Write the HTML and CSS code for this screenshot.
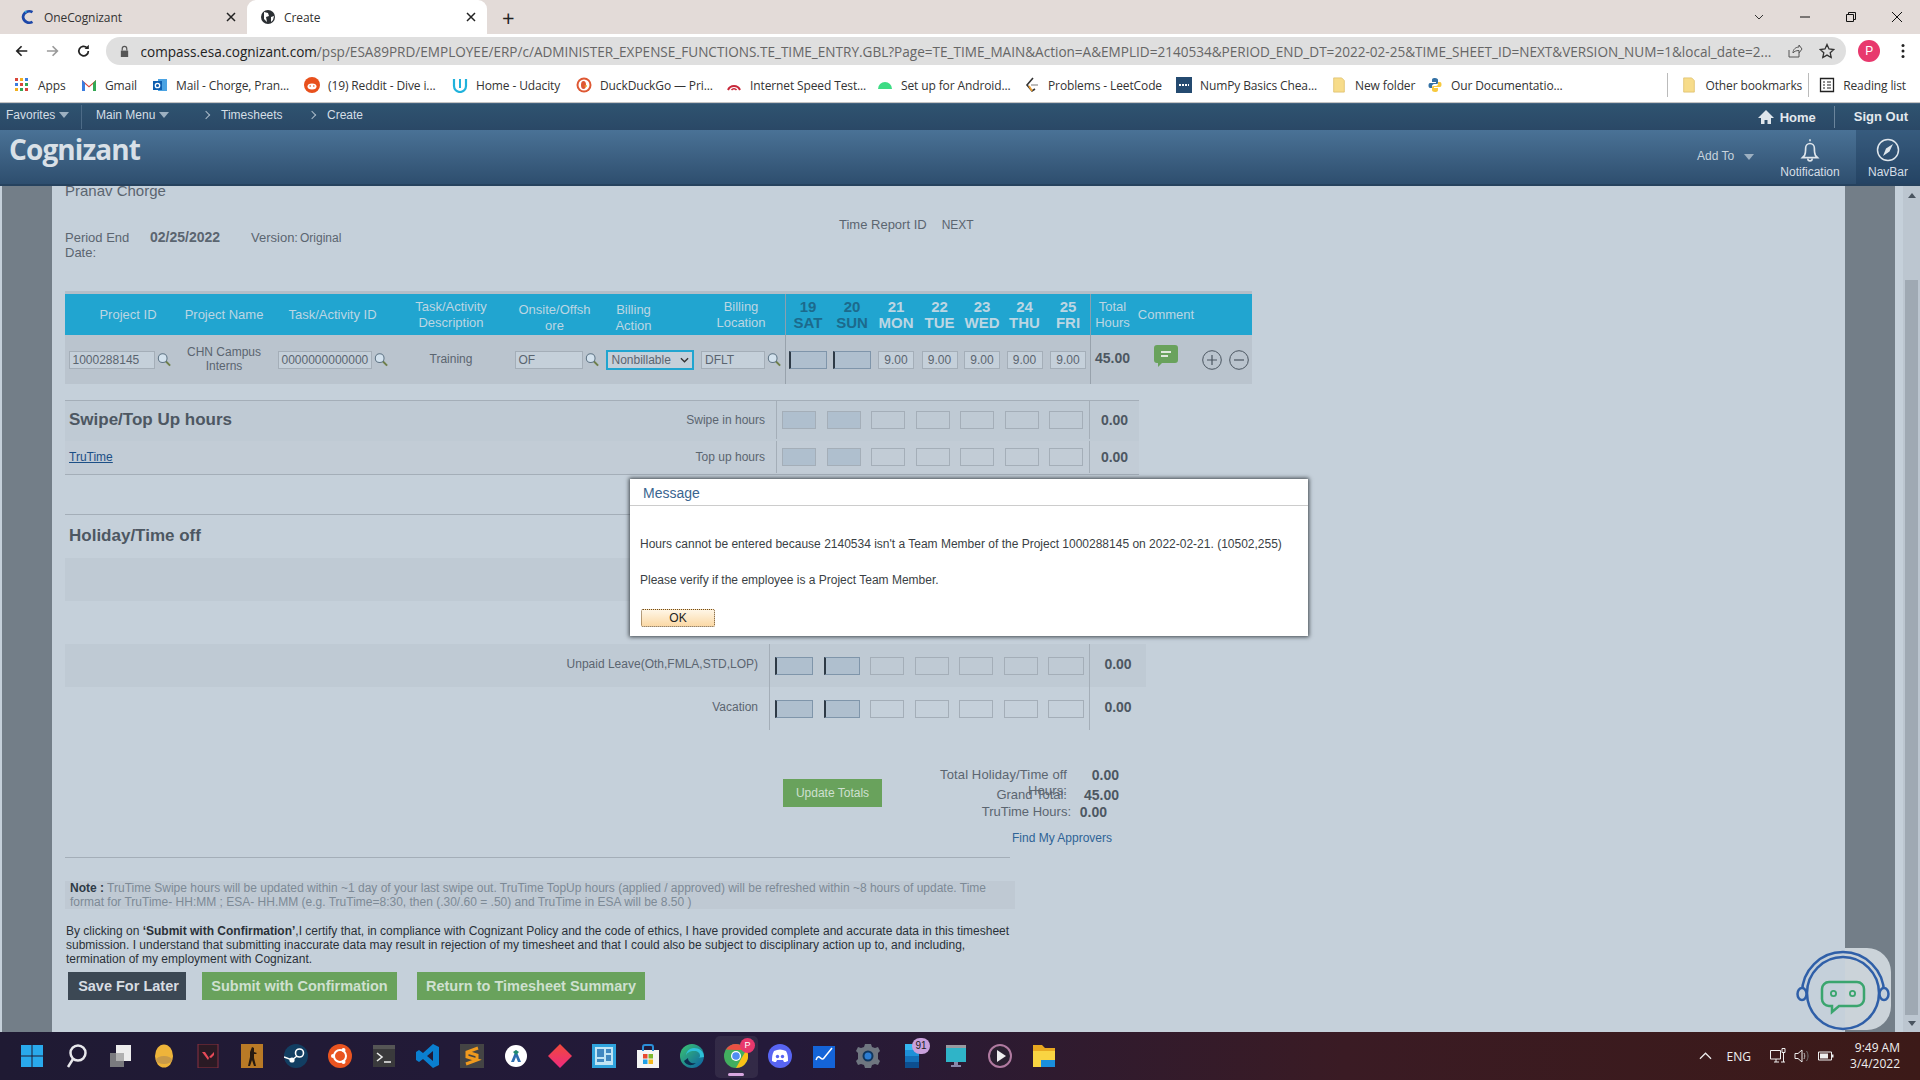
FILE: index.html
```html
<!DOCTYPE html>
<html lang="en">
<head>
    <meta charset="UTF-8">
    <title>Create</title>
    <link rel="stylesheet" href="styles.css">
</head>
<body>

<svg class="sprite" width="0" height="0">
    <symbol id="lens" viewBox="0 0 16 16">
        <path d="M10 10l5 5" stroke="#6f7f4a" stroke-width="2.2" fill="none"/>
        <circle cx="6.5" cy="6.5" r="5" fill="#d3e2ee" stroke="#5f7485" stroke-width="1.2"/>
    </symbol>
    <symbol id="folder" viewBox="0 0 16 18">
        <path d="M2 1h9l3 3v13H2z" fill="#f7dc8a" stroke="#dcbc62" stroke-width=".8"/>
    </symbol>
</svg>

<div class="tabstrip">
    <div class="tab">
        <svg class="favicon" viewBox="0 0 16 16"><path d="M12.5 3.2A6.3 6.3 0 0 0 3 8a6.3 6.3 0 0 0 9.500 4.800" fill="none" stroke="#1d47a8" stroke-width="2.600"/><path d="M5 2l1.500 1.500" stroke="#35b0e0" stroke-width="1.500"/></svg>
        <span class="tab-title">OneCognizant</span>
        <svg class="tab-close" viewBox="0 0 10 10"><path d="M1 1l8 8M9 1l-8 8" stroke="#222" stroke-width="1.500"/></svg>
    </div>
    <div class="tab active">
        <svg class="favicon" viewBox="0 0 16 16"><circle cx="8" cy="8" r="7" fill="#2b2f33"/><path d="M4 3l4 1 1 3-3 1 1 5-3-3zM11 8l3-1-1 4-2 2z" fill="#fff"/></svg>
        <span class="tab-title">Create</span>
        <svg class="tab-close" viewBox="0 0 10 10"><path d="M1 1l8 8M9 1l-8 8" stroke="#222" stroke-width="1.500"/></svg>
    </div>
    <div class="new-tab">+</div>
    <div class="window-btns">
        <svg viewBox="0 0 12 12"><path d="M2 4l4 4 4-4" fill="none" stroke="#333"/></svg>
        <svg viewBox="0 0 12 12"><path d="M1 6h10" stroke="#111"/></svg>
        <svg viewBox="0 0 12 12"><path d="M1.500 3.500h7v7h-7zM3.500 3.500v-2h7v7h-2" fill="none" stroke="#111"/></svg>
        <svg viewBox="0 0 12 12"><path d="M1 1l10 10M11 1L1 11" stroke="#111"/></svg>
    </div>
</div>

<div class="toolbar">
    <svg class="nav-ic" viewBox="0 0 16 16"><path d="M14 8H3M8 3L3 8l5 5" fill="none" stroke="#222" stroke-width="1.800"/></svg>
    <svg class="nav-ic" viewBox="0 0 16 16"><path d="M2 8h11M8 3l5 5-5 5" fill="none" stroke="#9a9a9a" stroke-width="1.800"/></svg>
    <svg class="nav-ic" viewBox="0 0 16 16"><path d="M13 8a5 5 0 1 1-1.500-3.500" fill="none" stroke="#222" stroke-width="1.800"/><path d="M13.500 1.500v4.500H9z" fill="#222"/></svg>
    <div class="omnibox">
        <svg class="lock" viewBox="0 0 12 14"><path d="M2 6h8v7H2z" fill="#555"/><path d="M3.500 6V4a2.500 2.500 0 0 1 5 0v2" fill="none" stroke="#555" stroke-width="1.300"/></svg>
        <div class="url"><span class="host">compass.esa.cognizant.com</span>/psp/ESA89PRD/EMPLOYEE/ERP/c/ADMINISTER_EXPENSE_FUNCTIONS.TE_TIME_ENTRY.GBL?Page=TE_TIME_MAIN&amp;Action=A&amp;EMPLID=2140534&amp;PERIOD_END_DT=2022-02-25&amp;TIME_SHEET_ID=NEXT&amp;VERSION_NUM=1&amp;local_date=2...</div>
        <svg class="omni-ic" viewBox="0 0 16 16"><path d="M2 7v7h10v-4M6 10c0-4 3-6 6-6V2l3 4-3 4V7.500c-3 0-5 1-6 2.500z" fill="none" stroke="#555"/></svg>
        <svg class="omni-ic" viewBox="0 0 16 16"><path d="M8 1.500l2 4.500 4.800.5-3.600 3.200 1 4.800L8 12.100 3.800 14.500l1-4.800L1.200 6.500 6 6z" fill="none" stroke="#333" stroke-width="1.300"/></svg>
    </div>
    <div class="toolbar-end">
        <div class="avatar">P</div>
        <svg class="menu-dots" viewBox="0 0 4 16"><circle cx="2" cy="2.500" r="1.500"/><circle cx="2" cy="8" r="1.500"/><circle cx="2" cy="13.500" r="1.500"/></svg>
    </div>
</div>

<div class="bookmarks">
    <div class="bm">
        <svg class="bm-ic" viewBox="0 0 16 16"><path d="M1 1h3v3H1z" fill="#d9453a"/><path d="M6 1h3v3H6z" fill="#f2b01e"/><path d="M11 1h3v3h-3z" fill="#3b7de0"/><path d="M1 6h3v3H1z" fill="#3b7de0"/><path d="M6 6h3v3H6z" fill="#d9453a"/><path d="M11 6h3v3h-3z" fill="#34a853"/><path d="M1 11h3v3H1z" fill="#f2b01e"/><path d="M6 11h3v3H6z" fill="#34a853"/><path d="M11 11h3v3h-3z" fill="#d9453a"/></svg>
        Apps
    </div>
    <div class="bm">
        <svg class="bm-ic" viewBox="0 0 16 16"><path d="M1 14V3l7 6 7-6v11h-3V7L8 10.500 4 7v7z" fill="#d9453a"/><path d="M1 14V3l3 3v8z" fill="#3b7de0"/><path d="M15 14V3l-3 3v8z" fill="#34a853"/></svg>
        Gmail
    </div>
    <div class="bm">
        <svg class="bm-ic" viewBox="0 0 16 16"><path d="M6 2h9v12H6z" fill="#4ba3e3"/><path d="M1 4h9v9H1z" fill="#0f5fb0"/><circle cx="5.500" cy="8.500" r="2.200" fill="none" stroke="#fff" stroke-width="1.300"/></svg>
        Mail - Chorge, Pran...
    </div>
    <div class="bm">
        <svg class="bm-ic" viewBox="0 0 16 16"><circle cx="8" cy="8" r="8" fill="#e8501c"/><ellipse cx="8" cy="9.500" rx="4.500" ry="3" fill="#fff"/><circle cx="6.200" cy="9" r=".8" fill="#e8501c"/><circle cx="9.800" cy="9" r=".8" fill="#e8501c"/></svg>
        (19) Reddit - Dive i...
    </div>
    <div class="bm">
        <svg class="bm-ic" viewBox="0 0 16 16"><path d="M2 2v7a6 6 0 0 0 12 0V2" fill="none" stroke="#1fb2dc" stroke-width="2.200"/><path d="M8 2v9" stroke="#1fb2dc" stroke-width="2"/></svg>
        Home - Udacity
    </div>
    <div class="bm">
        <svg class="bm-ic" viewBox="0 0 16 16"><circle cx="8" cy="8" r="7.500" fill="#de5833"/><circle cx="8" cy="8" r="5.500" fill="#fff"/><ellipse cx="7.500" cy="8" rx="2.500" ry="4" fill="#de5833"/><path d="M8 9l3-1v2z" fill="#f2c230"/></svg>
        DuckDuckGo — Pri...
    </div>
    <div class="bm">
        <svg class="bm-ic" viewBox="0 0 16 16"><path d="M2 13a6.500 6.500 0 0 1 12 0" fill="none" stroke="#c8283a" stroke-width="2"/><path d="M5.500 13a3 3 0 0 1 5 0" fill="none" stroke="#c8283a" stroke-width="1.500"/></svg>
        Internet Speed Test...
    </div>
    <div class="bm">
        <svg class="bm-ic" viewBox="0 0 16 16"><path d="M1 12a7 7 0 0 1 14 0z" fill="#3ddc84"/></svg>
        Set up for Android...
    </div>
    <div class="bm">
        <svg class="bm-ic" viewBox="0 0 16 16"><path d="M9 1L3 8l5 6 3-2" fill="none" stroke="#333" stroke-width="1.600"/><path d="M7 8h7" stroke="#aaa" stroke-width="1.600"/><path d="M5 9l3 5" stroke="#f0a030" stroke-width="1.600"/></svg>
        Problems - LeetCode
    </div>
    <div class="bm">
        <svg class="bm-ic" viewBox="0 0 16 16"><path d="M0 0h16v16H0z" fill="#244a70"/><path d="M3 8h10" stroke="#fff" stroke-width="2" stroke-dasharray="2 1"/></svg>
        NumPy Basics Chea...
    </div>
    <div class="bm">
        <svg class="bm-ic" viewBox="0 0 16 18"><use href="#folder"/></svg>
        New folder
    </div>
    <div class="bm">
        <svg class="bm-ic" viewBox="0 0 16 16"><path d="M8 1c-3 0-3 1-3 3v1h4v1H3c-2 0-2 5 0 5h2V9c0-1 1-2 2-2h3c1 0 1-1 1-2V3c0-1-1-2-3-2z" fill="#3572a5"/><path d="M8 15c3 0 3-1 3-3v-1H7v-1h6c2 0 2-5 0-5h-2v2c0 1-1 2-2 2H6c-1 0-1 1-1 2v2c0 1 1 2 3 2z" fill="#f7c93e"/></svg>
        Our Documentatio...
    </div>
    <div class="bm-end">
        <div class="bm-other">
            <svg class="bm-ic" viewBox="0 0 16 18"><use href="#folder"/></svg>
            Other bookmarks
        </div>
        <div class="bm-read">
            <svg class="bm-ic" viewBox="0 0 16 16"><path d="M1.500 1.500h13v13h-13z" fill="none" stroke="#222" stroke-width="1.300"/><path d="M4 5h2M4 8h2M4 11h2M8 5h4M8 8h4M8 11h4" stroke="#222" stroke-width="1.200"/></svg>
            Reading list
        </div>
    </div>
</div>

<div class="navbar">
    <div class="crumb favorites">Favorites<span class="caret"></span></div>
    <div class="crumb mainmenu">Main Menu<span class="caret"></span></div>
    <div class="crumb path"><span class="chev"></span>Timesheets</div>
    <div class="crumb path"><span class="chev"></span>Create</div>
    <div class="nav-end">
        <svg class="home-ic" viewBox="0 0 16 16"><path d="M8 1L0 9h3v6h3.500v-4h3v4H13V9h3z" fill="#dfe6ec"/></svg>
        <span class="nav-link">Home</span>
        <span class="nav-link signout">Sign Out</span>
    </div>
</div>

<div class="brandbar">
    <div class="logo">Cognizant</div>
    <div class="brand-end">
        <div class="addto">Add To<span class="caret"></span></div>
        <div class="brand-btn notif">
            <svg viewBox="0 0 20 24"><path d="M10 2v2M5 17c1-2 1-4 1-7a4 4 0 0 1 8 0c0 3 0 5 1 7l2 2H3zM8 20a2 2 0 0 0 4 0" fill="none" stroke="#dfe6ec" stroke-width="1.500"/></svg>
            <span>Notification</span>
        </div>
        <div class="brand-btn navbtn">
            <svg viewBox="0 0 24 24"><circle cx="12" cy="12" r="10.500" fill="none" stroke="#dfe6ec" stroke-width="1.500"/><path d="M17 6l-3.500 7.500-3.500-3zM7 18l3-7.500 3.500 3z" fill="#dfe6ec"/></svg>
            <span>NavBar</span>
        </div>
    </div>
</div>

<div class="main">
    <div class="gutter-left"></div>
    <div class="content">
        <div class="emp-name">Pranav Chorge</div>

        <div class="period">
            <div class="period-label">Period End Date:</div>
            <div class="period-date">02/25/2022</div>
            <div class="version">Version:<span>Original</span></div>
            <div class="report-id">Time Report ID<span>NEXT</span></div>
        </div>

        <div class="entry-table">
            <div class="th th-pid">Project ID</div>
            <div class="th">Project Name</div>
            <div class="th">Task/Activity ID</div>
            <div class="th">Task/Activity Description</div>
            <div class="th th-low th-onsite">Onsite/Offsh ore</div>
            <div class="th th-low th-action">Billing Action</div>
            <div class="th th-loc">Billing Location</div>
            <div class="th day dim">19<br>SAT</div>
            <div class="th day dim">20<br>SUN</div>
            <div class="th day">21<br>MON</div>
            <div class="th day">22<br>TUE</div>
            <div class="th day">23<br>WED</div>
            <div class="th day">24<br>THU</div>
            <div class="th day">25<br>FRI</div>
            <div class="th th-total">Total Hours</div>
            <div class="th">Comment</div>
            <div class="th"></div>
            <div class="th"></div>

            <div class="td"><div class="field w86">1000288145</div><svg class="lens"><use href="#lens"/></svg></div>
            <div class="td text">CHN Campus Interns</div>
            <div class="td"><div class="field w94">0000000000000</div><svg class="lens"><use href="#lens"/></svg></div>
            <div class="td text">Training</div>
            <div class="td"><div class="field w68">OF</div><svg class="lens"><use href="#lens"/></svg></div>
            <div class="td"><div class="select">Nonbillable<svg viewBox="0 0 10 6"><path d="M1 1l4 4 4-4" fill="none" stroke="#333" stroke-width="1.500"/></svg></div></div>
            <div class="td"><div class="field w64">DFLT</div><svg class="lens"><use href="#lens"/></svg></div>
            <div class="td cell-first"><div class="box off dark wide"></div></div>
            <div class="td"><div class="box off dark wide"></div></div>
            <div class="td"><div class="box">9.00</div></div>
            <div class="td"><div class="box">9.00</div></div>
            <div class="td"><div class="box">9.00</div></div>
            <div class="td"><div class="box">9.00</div></div>
            <div class="td"><div class="box">9.00</div></div>
            <div class="td total cell-first">45.00</div>
            <div class="td comment">
                <svg viewBox="0 0 24 22"><path d="M3 0h18a3 3 0 0 1 3 3v12a3 3 0 0 1-3 3H8l-4 4v-4H3a3 3 0 0 1-3-3V3a3 3 0 0 1 3-3z" fill="#69a25c"/><path d="M7 6h10v2H7zM7 10h7v2H7z" fill="#dfe9dc"/></svg>
            </div>
            <div class="td"><svg class="round-ic" viewBox="0 0 20 20"><circle cx="10" cy="10" r="9.300" fill="none" stroke="#4a5560"/><path d="M5 10h10M10 5v10" stroke="#4a5560" stroke-width="1.200"/></svg></div>
            <div class="td"><svg class="round-ic" viewBox="0 0 20 20"><circle cx="10" cy="10" r="9.300" fill="none" stroke="#4a5560"/><path d="M5 10h10" stroke="#4a5560" stroke-width="1.200"/></svg></div>
        </div>

        <div class="swipe">
            <div class="hours-row first">
                <div class="row-head"><h3>Swipe/Top Up hours</h3><span class="row-label">Swipe in hours</span></div>
                <div class="days"><div class="box off"></div><div class="box off"></div><div class="box"></div><div class="box"></div><div class="box"></div><div class="box"></div><div class="box"></div></div>
                <div class="row-total">0.00</div>
            </div>
            <div class="hours-row second">
                <div class="row-head"><a class="trutime" href="#">TruTime</a><span class="row-label">Top up hours</span></div>
                <div class="days"><div class="box off"></div><div class="box off"></div><div class="box"></div><div class="box"></div><div class="box"></div><div class="box"></div><div class="box"></div></div>
                <div class="row-total">0.00</div>
            </div>
        </div>

        <div class="holiday">
            <h3>Holiday/Time off</h3>
            <div class="leave-row stripe"></div>
            <div class="leave-row"></div>
            <div class="leave-row stripe">
                <span class="row-label">Unpaid Leave(Oth,FMLA,STD,LOP)</span>
                <div class="days"><div class="box off dark wide"></div><div class="box off dark"></div><div class="box narrow"></div><div class="box narrow"></div><div class="box narrow"></div><div class="box narrow"></div><div class="box"></div></div>
                <div class="row-total">0.00</div>
            </div>
            <div class="leave-row">
                <span class="row-label">Vacation</span>
                <div class="days"><div class="box off dark wide"></div><div class="box off dark"></div><div class="box narrow"></div><div class="box narrow"></div><div class="box narrow"></div><div class="box narrow"></div><div class="box"></div></div>
                <div class="row-total">0.00</div>
            </div>
        </div>

        <div class="totals">
            <button class="btn-update">Update Totals</button>
            <div class="totals-col">
                <div class="tot-row r1"><span class="tot-label">Total Holiday/Time off Hours:</span><b>0.00</b></div>
                <div class="tot-row r2"><span class="tot-label">Grand Total:</span><b>45.00</b></div>
                <div class="tot-row r3"><span class="tot-label">TruTime Hours:</span><b>0.00</b></div>
                <div class="find">Find My Approvers</div>
            </div>
        </div>

        <hr class="rule">

        <div class="note"><b>Note :</b> TruTime Swipe hours will be updated within ~1 day of your last swipe out. TruTime TopUp hours (applied / approved) will be refreshed within ~8 hours of update. Time format for TruTime- HH:MM ; ESA- HH.MM (e.g. TruTime=8:30, then (.30/.60 = .50) and TruTime in ESA will be 8.50 )</div>

        <div class="certify">By clicking on <b>‘Submit with Confirmation’</b>,I certify that, in compliance with Cognizant Policy and the code of ethics, I have provided complete and accurate data in this timesheet<br>submission. I understand that submitting inaccurate data may result in rejection of my timesheet and that I could also be subject to disciplinary action up to, and including,<br>termination of my employment with Cognizant.</div>

        <div class="actions">
            <button class="btn-dark">Save For Later</button>
            <button class="btn-green">Submit with Confirmation</button>
            <button class="btn-green btn-return">Return to Timesheet Summary</button>
        </div>
    </div>
    <div class="gutter-right"></div>
    <div class="scrollbar">
        <div class="arrow-up"></div>
        <div class="thumb"></div>
        <div class="arrow-down"></div>
    </div>
</div>

<div class="taskbar">
    <svg viewBox="0 0 24 24"><path d="M1 1h10.500v10.500H1zM12.500 1H23v10.500H12.500zM1 12.500h10.500V23H1zM12.500 12.500H23V23H12.500z" fill="#29a9ec"/></svg>
    <svg viewBox="0 0 24 24"><circle cx="14" cy="9" r="7.500" fill="none" stroke="#e8e8ec" stroke-width="2.500"/><path d="M9 15l-5 8" stroke="#e8e8ec" stroke-width="2.500"/></svg>
    <svg viewBox="0 0 24 24"><path d="M2 9h14v14H2z" fill="#7a7a7e"/><path d="M8 1h15v16H8z" fill="#ececec"/><path d="M8 9h8v8H8z" fill="#b0b0b0"/></svg>
    <svg viewBox="0 0 24 24"><ellipse cx="12" cy="12" rx="9" ry="11.500" fill="#eeb43a"/><ellipse cx="12" cy="16" rx="8" ry="4" fill="#c89a48"/></svg>
    <svg viewBox="0 0 24 24"><path d="M2 0h20v24H2z" fill="#2a1a24" stroke="#8a3040"/><path d="M6 8l6 8 1-2-4-6zM13 13l5-5v3l-3 3z" fill="#e84a58"/></svg>
    <svg viewBox="0 0 24 24"><path d="M1 0h22v24H1z" fill="#b97a26"/><path d="M12 3l2 1v4l3 1-1 1-2 0v4l2 8h-2l-2-6-2 6H8l2-9V8z" fill="#251a10"/></svg>
    <svg viewBox="0 0 24 24"><circle cx="12" cy="12" r="12" fill="#123e62"/><circle cx="15.500" cy="9" r="4" fill="none" stroke="#fff" stroke-width="1.600"/><circle cx="8" cy="16" r="2.600" fill="#fff"/><path d="M0 13l8 3 5-4" stroke="#fff" stroke-width="1.500" fill="none"/></svg>
    <svg viewBox="0 0 24 24"><circle cx="12" cy="12" r="12" fill="#e95420"/><circle cx="12" cy="12" r="6" fill="none" stroke="#fff" stroke-width="2"/><circle cx="5" cy="12" r="2" fill="#fff"/><circle cx="15.500" cy="6" r="2" fill="#fff"/><circle cx="15.500" cy="18" r="2" fill="#fff"/></svg>
    <svg viewBox="0 0 24 24"><path d="M1 1h22v22H1z" fill="#3a3a3c"/><path d="M1 1h22v4H1z" fill="#555"/><path d="M5 9l5 4-5 4M12 18h7" fill="none" stroke="#eee" stroke-width="1.600"/></svg>
    <svg viewBox="0 0 24 24"><path d="M17 0l6 3v18l-6 3-10-9-4 3-3-2v-8l3-2 4 3zM17 7l-6 5 6 5z" fill="#0a7fd0"/></svg>
    <svg viewBox="0 0 24 24"><path d="M0 0h24v24H0z" fill="#444"/><path d="M18 4L7 8v5l10 3-11 4 11-4v-5L7 8" fill="none" stroke="#f09a1e" stroke-width="3"/></svg>
    <svg viewBox="0 0 24 24"><circle cx="12" cy="12" r="11" fill="#fff"/><path d="M12 6l5 12h-3l-2-5-2 5H7z" fill="#2f6fb0"/><path d="M9 8l3-2 3 2-3 3z" fill="#1f8a70"/></svg>
    <svg viewBox="0 0 24 24"><defs><linearGradient id="gem" x1="0" y1="0" x2="0" y2="1"><stop offset="0" stop-color="#f04a3a"/><stop offset="1" stop-color="#ee2a80"/></linearGradient></defs><path d="M12 0l12 12-12 12L0 12z" fill="url(#gem)"/></svg>
    <svg viewBox="0 0 24 24"><path d="M0 0h24v24H0z" fill="#2fa3dc"/><path d="M3 3h18v18H3z" fill="#bfe4f4"/><path d="M5 5h7v8H5zM14 5h5v4h-5zM14 11h5v6h-5zM5 15h7v3H5z" fill="#3f87c0"/></svg>
    <svg viewBox="0 0 24 24"><path d="M1 6h22v18H1z" fill="#f4f4f4"/><path d="M7 7V3a2 2 0 0 1 2-2h6a2 2 0 0 1 2 2v4" fill="none" stroke="#2b8fd8" stroke-width="2"/><path d="M7 10h4.500v4.500H7z" fill="#e8492f"/><path d="M12.500 10H17v4.500h-4.500z" fill="#7cb82f"/><path d="M7 15.500h4.500V20H7z" fill="#1fa0e8"/><path d="M12.500 15.500H17V20h-4.500z" fill="#f5b81e"/></svg>
    <svg viewBox="0 0 24 24"><defs><linearGradient id="edge" x1="0" y1="0" x2="1" y2="1"><stop offset="0" stop-color="#3bc46e"/><stop offset="1" stop-color="#0b5fa8"/></linearGradient></defs><circle cx="12" cy="12" r="12" fill="url(#edge)"/><path d="M24 13c0-6-5-9-10-9-5 0-8 4-8 8 0-3 4-5 8-5 4 0 6 2 6 5 0 1-1 2-3 2z" fill="#2ec0d8"/><path d="M8 14c0 4 4 6 8 5-5 4-10 2-12-2z" fill="#0d2d50"/></svg>
    <div class="task-active">
        <svg viewBox="0 0 24 24"><circle cx="12" cy="12" r="12" fill="#34a853"/><path d="M12 0a12 12 0 0 1 10.400 6H12z" fill="#ea4335"/><path d="M2 5.500A12 12 0 0 1 12 0v6z" fill="#ea4335"/><path d="M22.400 6A12 12 0 0 1 12 24l5-9z" fill="#fbbc05"/><circle cx="12" cy="12" r="5" fill="#fff"/><circle cx="12" cy="12" r="3.800" fill="#4285f4"/></svg>
        <span class="p-badge">P</span>
        <span class="run-mark"></span>
    </div>
    <svg viewBox="0 0 24 24"><circle cx="12" cy="12" r="12" fill="#5865f2"/><path d="M6 7c4-2 8-2 12 0 2 3 2 7 2 10-2 1-3 1-4 1l-1-2H9l-1 2c-1 0-2 0-4-1 0-3 0-7 2-10z" fill="#fff"/><circle cx="9.500" cy="12.500" r="1.700" fill="#5865f2"/><circle cx="14.500" cy="12.500" r="1.700" fill="#5865f2"/></svg>
    <svg viewBox="0 0 24 24"><path d="M1 2h22v22H1z" fill="#1464d8"/><path d="M4 16c3-8 5 2 8-2s5-6 8-10" fill="none" stroke="#fff" stroke-width="1.500"/></svg>
    <svg viewBox="0 0 24 24"><path d="M9 0h6l1 3 3 1 3-1 2 4-2 2v6l2 2-2 4-3-1-3 1-1 3H9l-1-3-3-1-3 1-2-4 2-2V9L0 7l2-4 3 1 3-1z" fill="#6f7680"/><circle cx="12" cy="12" r="5.500" fill="#10365e"/><circle cx="12" cy="12" r="3.500" fill="#2d7dd2"/></svg>
    <div class="task-badged">
        <svg viewBox="0 0 24 24"><path d="M5 0h14v6H5z" fill="#35b6f0"/><path d="M5 6h14v6H5z" fill="#1e90d8"/><path d="M5 12h14v6H5z" fill="#1470b8"/><path d="M5 18h14v6H5z" fill="#0d4f90"/></svg>
        <span class="num-badge">91</span>
    </div>
    <svg viewBox="0 0 24 24"><path d="M2 1h20v17H2z" fill="#2fb4c8"/><path d="M2 1h20v3H2z" fill="#9a9aa0"/><path d="M10 18h4v3h-4zM7 21h10v2H7z" fill="#88a"/></svg>
    <svg viewBox="0 0 24 24"><circle cx="12" cy="12" r="11" fill="#2a2030" stroke="#b07aa0" stroke-width="2"/><path d="M9 6l9 6-9 6z" fill="#eee"/></svg>
    <svg viewBox="0 0 24 24"><path d="M1 1h9l3 3h10v19H1z" fill="#e8a820"/><path d="M1 7h22v16H1z" fill="#f9d442"/><path d="M9 16h14v7H9z" fill="#1a8fdc"/></svg>

    <div class="tray">
        <svg class="tray-up" viewBox="0 0 14 8"><path d="M1 7l6-6 6 6" fill="none" stroke="#eee" stroke-width="1.300"/></svg>
        <span class="lang">ENG</span>
        <svg class="tray-net" viewBox="0 0 16 16"><path d="M.5 2.500h10v8.500H.5zM4 14h5M6 11v3M13.500 4v10M11 14h4" fill="none" stroke="#eee"/><path d="M12 .5h3v4h-3z" fill="none" stroke="#eee"/></svg>
        <svg class="tray-vol" viewBox="0 0 16 16"><path d="M1 5.500h3l4-3.500v12l-4-3.500H1z" fill="none" stroke="#eee"/><path d="M10 5c1 2 1 4 0 6" fill="none" stroke="#bbb"/><path d="M12.500 3c2 3 2 7 0 10" fill="none" stroke="#777"/></svg>
        <svg class="tray-bat" viewBox="0 0 16 10"><path d="M.5 1h13v8H.5z" fill="none" stroke="#eee"/><path d="M2 2.500h8v5H2z" fill="#eee"/><path d="M14 3.500h1.500v3H14z" fill="#eee"/></svg>
        <div class="clock">9:49 AM<br>3/4/2022</div>
    </div>
</div>

<div class="modal">
    <div class="modal-title">Message</div>
    <div class="modal-body">
        <p>Hours cannot be entered because 2140534 isn't a Team Member of the Project 1000288145 on 2022-02-21. (10502,255)</p>
        <p>Please verify if the employee is a Project Team Member.</p>
        <button class="btn-ok">OK</button>
    </div>
</div>

<div class="chatbot">
    <svg viewBox="0 0 96 90">
        <path d="M7 45a41 41 0 0 1 82 0" fill="none" stroke="#2f5fa8" stroke-width="2.500"/>
        <circle cx="48" cy="45" r="36" fill="none" stroke="#2f5fa8" stroke-width="2.500"/>
        <ellipse cx="7" cy="46" rx="4.500" ry="6" fill="#c5d0da" stroke="#2f5fa8" stroke-width="2.500"/>
        <ellipse cx="89" cy="46" rx="4.500" ry="6" fill="#c5d0da" stroke="#2f5fa8" stroke-width="2.500"/>
        <path d="M34 34h28a7 7 0 0 1 7 7v10a7 7 0 0 1-7 7H44l-7 6v-6h-3a7 7 0 0 1-7-7V41a7 7 0 0 1 7-7z" fill="none" stroke="#3aa56e" stroke-width="2.500"/>
        <circle cx="38.500" cy="45.500" r="2.600" fill="none" stroke="#3aa56e" stroke-width="1.800"/>
        <circle cx="57.500" cy="45.500" r="2.600" fill="none" stroke="#3aa56e" stroke-width="1.800"/>
    </svg>
</div>

</body>
</html>
```

FILE: styles.css
```css
:root {
    --page: #c5d0da;
    --stripe: #bfcad4;
    --line: #a4aeb8;
    --text: #5b6570;
    --head: #21a5d0;
    --green: #69a25c;
}

* {
    box-sizing: border-box;
}

html, body {
    margin: 0;
    height: 100%;
    overflow: hidden;
}

body {
    display: flex;
    flex-direction: column;
    font-family: "Liberation Sans", Arial, sans-serif;
    font-size: 12px;
    color: var(--text);
    background-color: var(--page);
}

.sprite {
    position: absolute;
}

/* browser chrome */
.tabstrip {
    height: 34px;
    display: flex;
    align-items: stretch;
    padding-left: 7px;
    background-color: #e3dbd8;
    font-family: "Open Sans", sans-serif;
}

.tab {
    width: 240px;
    display: flex;
    align-items: center;
    padding: 0 11px 0 13px;
    font-size: 12px;
    letter-spacing: -.1px;
    color: #333;
}

.tab.active {
    background-color: #fff;
    border-radius: 9px 9px 0 0;
}

.favicon {
    width: 16px;
    height: 16px;
    margin-right: 8px;
}

.tab-title {
    flex: 1;
}

.tab-close {
    width: 10px;
    height: 10px;
}

.new-tab {
    margin-left: 15px;
    align-self: center;
    font-size: 22px;
    line-height: 26px;
    color: #222;
}

.window-btns {
    margin-left: auto;
    display: flex;
    align-items: center;
    gap: 34px;
    padding-right: 17px;
}

.window-btns svg {
    width: 12px;
    height: 12px;
}

.toolbar {
    height: 34px;
    display: flex;
    align-items: center;
    padding-left: 6px;
    background-color: #fff;
}

.nav-ic {
    width: 16px;
    height: 16px;
    margin: 0 8px;
}

.omnibox {
    flex: 1;
    height: 28px;
    margin-left: 6px;
    display: flex;
    align-items: center;
    padding: 0 11px 0 13px;
    border-radius: 14px;
    background-color: #dfdfdf;
}

.lock {
    width: 11px;
    height: 13px;
    margin-right: 11px;
}

.url {
    flex: 1;
    padding-top: 1px;
    white-space: nowrap;
    overflow: hidden;
    font-family: "Open Sans", sans-serif;
    font-size: 13.57px;
    color: #666;
}

.host {
    color: #222;
}

.omni-ic {
    width: 16px;
    height: 16px;
    margin-left: 16px;
}

.toolbar-end {
    width: 77px;
    display: flex;
    align-items: center;
    padding-left: 12px;
}

.avatar {
    width: 22px;
    height: 22px;
    border-radius: 50%;
    background-color: #e8386d;
    color: #fff;
    font-size: 12px;
    line-height: 22px;
    text-align: center;
}

.menu-dots {
    width: 4px;
    height: 16px;
    margin-left: 21px;
    fill: #222;
}

.bookmarks {
    height: 35px;
    display: grid;
    grid-template-columns: 67px 71px 152px 148px 124px 150px 151px 147px 152px 155px 96px 230px 1fr;
    align-items: center;
    padding-left: 14px;
    background-color: #fff;
    border-bottom: 1px solid #c4c4c4;
    font-family: "Open Sans", sans-serif;
    font-size: 12px;
    letter-spacing: -.12px;
    color: #333;
    white-space: nowrap;
}

.bm, .bm-other, .bm-read {
    display: flex;
    align-items: center;
}

.bm-ic {
    width: 16px;
    height: 16px;
    margin-right: 8px;
    flex: none;
}

.bm-end {
    display: flex;
    align-items: center;
    justify-content: flex-end;
    padding-right: 14px;
}

.bm-other {
    padding: 0 6px 0 13px;
    border-left: 1px solid #bbb;
    height: 24px;
}

.bm-read {
    padding-left: 10px;
    border-left: 1px solid #bbb;
    height: 24px;
}

/* peoplesoft header */
.navbar {
    height: 27px;
    display: flex;
    align-items: center;
    background: linear-gradient(#2f5370, #2a4866);
    color: #d5dee6;
    border-top: 1px solid #43627f;
}

.crumb {
    display: flex;
    align-items: center;
    padding-bottom: 4px;
}

.favorites {
    width: 82px;
    height: 24px;
    padding-left: 6px;
    border-right: 1px solid #4d6b87;
}

.mainmenu {
    width: 109px;
    padding-left: 14px;
}

.path {
    width: 106px;
    padding-left: 12px;
}

.caret {
    display: inline-block;
    width: 0;
    height: 0;
    margin-left: 4px;
    border-left: 5px solid transparent;
    border-right: 5px solid transparent;
    border-top: 6px solid #9db0c1;
}

.chev {
    width: 6px;
    height: 6px;
    margin-right: 12px;
    border-top: 1px solid #a9bac8;
    border-right: 1px solid #a9bac8;
    transform: rotate(45deg);
}

.nav-end {
    margin-left: auto;
    display: flex;
    align-items: center;
    padding-right: 12px;
    font-size: 13px;
    font-weight: bold;
    color: #e3e9ee;
}

.home-ic {
    width: 16px;
    height: 16px;
    margin-right: 6px;
}

.signout {
    margin-left: 18px;
    padding-left: 19px;
    border-left: 1px solid #6b859c;
    line-height: 22px;
}

.brandbar {
    height: 56px;
    display: flex;
    justify-content: space-between;
    background: linear-gradient(#4a7296, #2e4e6e);
    border-bottom: 2px solid #26425e;
    color: #d5dee6;
}

.logo {
    padding: 1px 0 0 9px;
    font-family: "Open Sans", sans-serif;
    font-size: 28px;
    line-height: 36px;
    font-weight: 700;
    letter-spacing: -.9px;
    color: #d9e0e7;
}

.brand-end {
    display: flex;
}

.addto {
    width: 78px;
    padding-top: 19px;
    display: flex;
    align-items: flex-start;
    color: #c8d4de;
}

.addto .caret {
    margin: 5px 0 0 10px;
}

.brand-btn {
    display: flex;
    flex-direction: column;
    align-items: center;
    padding-top: 7px;
}

.brand-btn svg {
    width: 24px;
    height: 26px;
    margin-bottom: 2px;
}

.notif {
    width: 70px;
    margin-right: 11px;
}

.navbtn {
    width: 64px;
    background-color: rgba(20, 50, 80, .35);
}

/* page */
.main {
    flex: 1;
    min-height: 0;
    display: flex;
}

.gutter-left {
    width: 52px;
    border-left: 2px solid var(--page);
    background-color: #737e88;
}

.content {
    flex: 1;
    min-width: 0;
    padding-left: 13px;
    overflow: hidden;
}

.gutter-right {
    width: 50px;
    margin-right: 8px;
    background-color: #737e88;
}

.scrollbar {
    width: 17px;
    padding: 0 2px;
    display: flex;
    flex-direction: column;
    align-items: center;
    background-color: #bcc6d0;
}

.arrow-up {
    margin-top: 7px;
    border-left: 4px solid transparent;
    border-right: 4px solid transparent;
    border-bottom: 5px solid #4a5560;
}

.thumb {
    width: 13px;
    flex: 1;
    margin: 82px 0 6px;
    background-color: #9fa9b3;
}

.arrow-down {
    margin-bottom: 6px;
    border-left: 4px solid transparent;
    border-right: 4px solid transparent;
    border-top: 5px solid #4a5560;
}

.emp-name {
    margin-top: -4px;
    font-size: 15px;
    line-height: 17px;
}

.period {
    margin-top: 31px;
    height: 30px;
    display: flex;
    font-size: 13px;
    line-height: 15px;
}

.period-label {
    width: 85px;
    padding-right: 15px;
}

.period-date {
    width: 101px;
    font-size: 14px;
    font-weight: bold;
}

.version {
    width: 588px;
}

.version span {
    margin-left: 2px;
    font-size: 12px;
}

.report-id {
    margin-top: -13px;
}

.report-id span {
    margin-left: 15px;
    font-size: 12px;
}

/* entry table */
.entry-table {
    margin-top: 31px;
    width: 1187px;
    display: grid;
    grid-template-columns: 109px 100px 117px 120px 91px 95px 88px 45px 44px 44px 43px 42px 43px 44px 44px 64px 27px 27px;
    grid-template-rows: 41px 49px;
    border-top: 3px solid #b4bec8;
    background-color: #bac4ce;
}

.th {
    display: flex;
    align-items: center;
    justify-content: center;
    text-align: center;
    font-size: 13px;
    line-height: 16px;
    color: #bcd6e3;
    background-color: var(--head);
}

.th.day {
    font-size: 15px;
    font-weight: bold;
}

.th.dim {
    color: #1c6a8c;
}

.th-pid {
    padding-left: 17px;
}

.th-low {
    padding-top: 7px;
}

.th-onsite {
    padding-right: 4px;
}

.th-action {
    padding: 7px 36px 0 4px;
}

.th-loc {
    padding: 0 20px;
}

.th.day:nth-child(8), .th-total {
    border-left: 1px solid #8aa0b0;
}

.td {
    display: flex;
    align-items: center;
    justify-content: center;
    text-align: center;
}

.td.text {
    padding: 0 6px 2px;
    line-height: 14px;
}

.cell-first {
    border-left: 1px solid #98a2ac;
}

.field {
    height: 18px;
    padding-left: 3px;
    border: 1px solid var(--line);
    background-color: #c5d0da;
    text-align: left;
    line-height: 16px;
    overflow: hidden;
    white-space: nowrap;
}

.w86 { width: 86px; }
.w94 { width: 94px; }
.w68 { width: 68px; }
.w64 { width: 64px; }

.lens {
    width: 14px;
    height: 15px;
    margin-left: 2px;
    flex: none;
}

.select {
    width: 88px;
    height: 20px;
    display: flex;
    align-items: center;
    justify-content: space-between;
    padding: 0 3px 0 4px;
    border: 2px solid var(--head);
    background-color: #c5d0da;
}

.select svg {
    width: 9px;
    height: 6px;
}

.box {
    width: 34px;
    height: 18px;
    border: 1px solid var(--line);
    line-height: 16px;
    text-align: center;
    flex: none;
}

.entry-table .box {
    width: 36px;
    background-color: #c5d0da;
}

.box.off {
    background-color: #afbfce;
}

.entry-table .box.off {
    width: 38px;
    background-color: #afbfce;
}

.box.dark {
    width: 36px;
    border: 1px solid #7f95aa;
    border-left: 2px solid #2e3a46;
}

.box.dark.wide {
    width: 38px;
}

.holiday .box {
    width: 36px;
}

.holiday .box.narrow {
    width: 34px;
}

.td.total {
    padding-bottom: 3px;
    font-size: 14px;
    font-weight: bold;
    color: #4d5762;
}

.comment svg {
    width: 24px;
    height: 22px;
    margin-bottom: 7px;
}

.round-ic {
    width: 20px;
    height: 20px;
}

/* hours sections */
h3 {
    margin: 0;
    font-size: 17px;
    color: #4d5762;
}

.swipe {
    margin-top: 16px;
    width: 1074px;
    border-top: 1px solid var(--line);
    border-bottom: 1px solid var(--line);
}

.hours-row {
    display: flex;
    background-color: var(--stripe);
}

.hours-row.first {
    height: 40px;
    padding-bottom: 2px;
}

.hours-row.second {
    height: 33px;
    padding-bottom: 1px;
    background-color: #c2ccd6;
}

.row-head {
    width: 711px;
    padding: 0 11px 0 4px;
    display: flex;
    align-items: center;
    justify-content: space-between;
}

.trutime {
    color: #1c4f86;
}

.days {
    width: 314px;
    display: flex;
    align-items: center;
    justify-content: space-between;
    padding: 0 6px 0 5px;
    border-left: 1px solid var(--line);
    border-right: 1px solid var(--line);
}

.row-total {
    flex: 1;
    display: flex;
    align-items: center;
    justify-content: center;
    font-size: 14px;
    font-weight: bold;
    color: #4d5762;
}

.holiday {
    margin-top: 39px;
    width: 1081px;
    border-top: 1px solid var(--line);
}

.holiday h3 {
    height: 43px;
    padding: 11px 0 0 4px;
    line-height: 20px;
}

.leave-row {
    height: 43px;
    display: flex;
    align-items: center;
    justify-content: flex-end;
}

.leave-row.stripe {
    background-color: var(--stripe);
}

.leave-row .row-label {
    flex: 1;
    padding: 0 11px 3px 0;
    text-align: right;
}

.leave-row .days {
    width: 321px;
    height: 100%;
    padding: 0 5px;
}

.leave-row .row-total {
    flex: none;
    width: 56px;
    height: 100%;
    padding-bottom: 3px;
}

.totals {
    height: 115px;
    display: flex;
}

.btn-update {
    width: 99px;
    height: 28px;
    margin: 49px 0 0 718px;
    border: 0;
    background-color: var(--green);
    color: #cfe0d0;
    font-family: inherit;
    font-size: 12px;
}

.totals-col {
    margin: 37px 0 0 55px;
    font-size: 13px;
}

.tot-row {
    display: flex;
}

.tot-row b {
    width: 52px;
    text-align: right;
    font-size: 14px;
    color: #4d5762;
}

.tot-label {
    width: 130px;
    text-align: right;
    line-height: 16px;
}

.r1 {
    height: 17px;
}

.r1 .tot-label {
    letter-spacing: .12px;
}

.r2 {
    height: 20px;
    padding-top: 3px;
}

.r3 {
    height: 14px;
}

.r3 .tot-label {
    width: 134px;
}

.r3 b {
    width: 36px;
}

.find {
    margin: 13px 0 0 75px;
    font-size: 12px;
    line-height: 14px;
    color: #2e6396;
}

.rule {
    width: 945px;
    height: 1px;
    margin: 12px 0 0;
    border: 0;
    background-color: var(--line);
}

.note {
    width: 950px;
    height: 28px;
    margin-top: 23px;
    padding: 0 5px;
    background-color: #bfc9d3;
    line-height: 14px;
    color: #7d8a96;
}

.note b {
    color: #2e3a46;
}

.certify {
    width: 950px;
    margin: 15px 0 0 1px;
    line-height: 14px;
    color: #2a3038;
}

.actions {
    margin: 6px 0 0 3px;
    display: flex;
    gap: 16px;
}

.actions button {
    height: 28px;
    padding: 0;
    border: 0;
    font-family: inherit;
    font-size: 14.5px;
    font-weight: bold;
}

.actions .btn-dark {
    width: 118px;
    padding-left: 3px;
    background-color: #3c4854;
    color: #d8dde2;
}

.btn-green {
    width: 195px;
    background-color: var(--green);
    color: #cfe0d0;
}

.btn-return {
    width: 228px;
    margin-left: 4px;
}

/* taskbar */
.taskbar {
    height: 48px;
    display: flex;
    align-items: center;
    gap: 20px;
    padding-left: 20px;
    background: linear-gradient(90deg, #1f1a33, #241a3a 40%, #3a1b24 70%, #3c1a18);
}

.taskbar > svg {
    width: 24px;
    height: 24px;
    flex: none;
}

.task-active, .task-badged {
    position: relative;
    width: 24px;
    height: 24px;
    flex: none;
}

.task-active svg, .task-badged svg {
    width: 24px;
    height: 24px;
}

.task-active::before {
    content: "";
    position: absolute;
    inset: -8px -10px -10px -9px;
    border-radius: 5px;
    background-color: rgba(255, 255, 255, .07);
}

.p-badge {
    position: absolute;
    top: -6px;
    right: -7px;
    width: 15px;
    height: 15px;
    border-radius: 50%;
    background-color: #e8386d;
    color: #fff;
    font-size: 9px;
    line-height: 15px;
    text-align: center;
}

.run-mark {
    position: absolute;
    left: 4px;
    bottom: -8px;
    width: 16px;
    height: 3px;
    border-radius: 2px;
    background-color: #d9a7e0;
}

.num-badge {
    position: absolute;
    top: -6px;
    right: -6px;
    width: 18px;
    height: 16px;
    border-radius: 8px;
    background-color: #c9a0dc;
    color: #222;
    font-size: 10px;
    line-height: 16px;
    text-align: center;
}

.tray {
    margin-left: auto;
    display: flex;
    align-items: center;
    padding-right: 20px;
    color: #f0f0f0;
}

.tray-up {
    width: 13px;
    height: 8px;
    margin-right: 15px;
}

.lang {
    margin-right: 19px;
    font-family: "Open Sans", sans-serif;
    font-size: 12px;
}

.tray-net, .tray-vol {
    width: 16px;
    height: 16px;
    margin-right: 8px;
}

.tray-bat {
    width: 16px;
    height: 10px;
    margin-right: 16px;
}

.clock {
    font-family: "Open Sans", sans-serif;
    font-size: 12px;
    line-height: 16px;
    text-align: right;
}

/* overlays */
.modal {
    position: absolute;
    left: 630px;
    top: 479px;
    width: 678px;
    height: 157px;
    background-color: #fff;
    box-shadow: 0 0 4px 1px rgba(20, 25, 30, .75);
}

.modal-title {
    height: 27px;
    padding-left: 13px;
    border-bottom: 1px solid #ccc;
    font-size: 14px;
    line-height: 28px;
    color: #3a6590;
}

.modal-body {
    padding: 31px 10px 0;
    color: #3a3f45;
}

.modal-body p {
    margin: 0 0 22px;
    line-height: 14px;
}

.btn-ok {
    display: block;
    width: 74px;
    height: 18px;
    margin: 0 0 0 1px;
    padding: 0;
    border: 1px dotted #6a4a20;
    border-radius: 2px;
    background: linear-gradient(#fff6e6, #fbd9a6);
    font-family: inherit;
    font-size: 12px;
    color: #222;
}

.chatbot {
    position: absolute;
    left: 1795px;
    top: 948px;
    width: 96px;
    height: 84px;
}

.chatbot::before {
    content: "";
    position: absolute;
    left: 50px;
    top: 0;
    width: 46px;
    height: 82px;
    border-radius: 0 24px 24px 0;
    background-color: rgba(225, 232, 238, .8);
}

.chatbot svg {
    position: relative;
    width: 96px;
    height: 90px;
}
```
